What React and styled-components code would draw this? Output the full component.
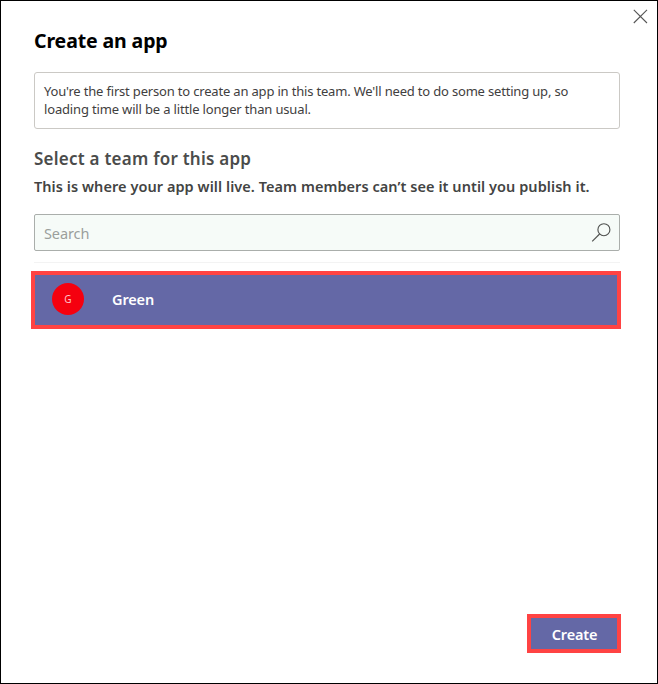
import React from "react";
import styled, { createGlobalStyle } from "styled-components";

const GlobalStyle = createGlobalStyle`
  *, *::before, *::after { box-sizing: border-box; }
  body { margin: 0; background: #fff; font-family: "Noto Sans", "Open Sans", sans-serif; }
  button, input { font-family: inherit; }
`;

const Dialog = styled.main`
  display: flex;
  flex-direction: column;
  width: 658px;
  height: 684px;
  padding: 0 37px 30px 33px;
  border: 1px solid #000;
  background: #fff;
`;

const TopBar = styled.header`
  display: flex;
  justify-content: flex-end;
  height: 28px;
  margin-right: -28px;
  padding-top: 7px;
`;

const CloseButton = styled.button`
  display: flex;
  width: 16px;
  height: 16px;
  padding: 0;
  border: 0;
  background: none;
`;

const Title = styled.h1`
  height: 24px;
  margin: 0;
  color: #000;
  font-size: 19.5px;
  font-weight: 700;
  line-height: 24px;
  letter-spacing: -0.12px;
  white-space: nowrap;
`;

const Notice = styled.p`
  height: 57px;
  margin: 19px 0 0;
  padding: 9px;
  border: 1px solid #cbc9c5;
  border-radius: 3px;
  color: #3f4040;
  font-size: 13px;
  line-height: 18px;
`;

const NoticeLine = styled.span`
  display: block;
  white-space: nowrap;
  letter-spacing: ${(p) => p.$spacing};
`;

const Heading = styled.h2`
  height: 22px;
  margin: 19px 0 0;
  color: #4b4c4b;
  font-size: 17px;
  font-weight: 600;
  line-height: 22px;
  letter-spacing: 0.24px;
  white-space: nowrap;
`;

const Subheading = styled.p`
  height: 20px;
  margin: 6px 0 0;
  color: #434443;
  font-size: 14.5px;
  font-weight: 600;
  line-height: 20px;
  letter-spacing: 0.06px;
  white-space: nowrap;
`;

const SearchBox = styled.label`
  display: flex;
  align-items: center;
  justify-content: space-between;
  height: 37px;
  margin-top: 18px;
  padding: 0 8px 0 9px;
  border: 1px solid #aaaeab;
  border-radius: 2px;
  background: #f6fbf8;
`;

const SearchInput = styled.input`
  width: 300px;
  height: 34px;
  padding: 1px 0 0;
  border: 0;
  outline: 0;
  background: transparent;
  font-size: 14.5px;
  letter-spacing: -0.1px;
  &::placeholder { color: #9b9f9c; opacity: 1; }
`;

const Divider = styled.hr`
  width: 100%;
  height: 1px;
  margin: 11px 0 8px;
  border: 0;
  background: #f3f3f3;
`;

const TeamRow = styled.div`
  display: flex;
  align-items: center;
  width: 590px;
  height: 58px;
  margin-left: -3px;
  padding-left: 17px;
  border: 4px solid #ff4343;
  background: #6468a6;
`;

const Avatar = styled.span`
  display: flex;
  align-items: center;
  justify-content: center;
  width: 32px;
  height: 32px;
  margin: 0 28px 2px 0;
  border-radius: 50%;
  background: #f5000f;
  color: #ffc4c8;
  font-size: 10px;
`;

const TeamName = styled.span`
  margin-bottom: 2px;
  color: #fff;
  font-size: 14.5px;
  font-weight: 600;
  line-height: 20px;
  letter-spacing: -0.15px;
`;

const Footer = styled.footer`
  display: flex;
  justify-content: flex-end;
  margin: auto -1px 0 0;
`;

const CreateButton = styled.button`
  width: 94px;
  height: 39px;
  padding: 0 0 0 1px;
  border: 4px solid #ff4343;
  background: #6468a6;
  color: #fff;
  font-size: 14.5px;
  font-weight: 600;
  line-height: 20px;
  letter-spacing: -0.2px;
`;

const CloseIcon = () => (
  <svg width="16" height="16" viewBox="0 0 16 16" fill="none" stroke="#555" strokeWidth="1.1">
    <path d="M1.8 1.8 15 15M15 1.8 1.8 15" />
  </svg>
);

const SearchIcon = () => (
  <svg width="20" height="20" viewBox="0 0 20 20" fill="none" stroke="#505250" strokeWidth="1.15">
    <circle cx="12.9" cy="6.7" r="6" />
    <path d="M8.6 11 1.2 18.4" />
  </svg>
);

export default function App() {
  return (
    <>
      <GlobalStyle />
      <Dialog>
        <TopBar>
          <CloseButton aria-label="Close"><CloseIcon /></CloseButton>
        </TopBar>
        <Title>Create an app</Title>
        <Notice>
          <NoticeLine $spacing="-0.18px">You're the first person to create an app in this team. We'll need to do some setting up, so</NoticeLine>
          <NoticeLine $spacing="-0.16px">loading time will be a little longer than usual.</NoticeLine>
        </Notice>
        <Heading>Select a team for this app</Heading>
        <Subheading>This is where your app will live. Team members can’t see it until you publish it.</Subheading>
        <SearchBox>
          <SearchInput placeholder="Search" />
          <SearchIcon />
        </SearchBox>
        <Divider />
        <TeamRow>
          <Avatar>G</Avatar>
          <TeamName>Green</TeamName>
        </TeamRow>
        <Footer>
          <CreateButton>Create</CreateButton>
        </Footer>
      </Dialog>
    </>
  );
}
